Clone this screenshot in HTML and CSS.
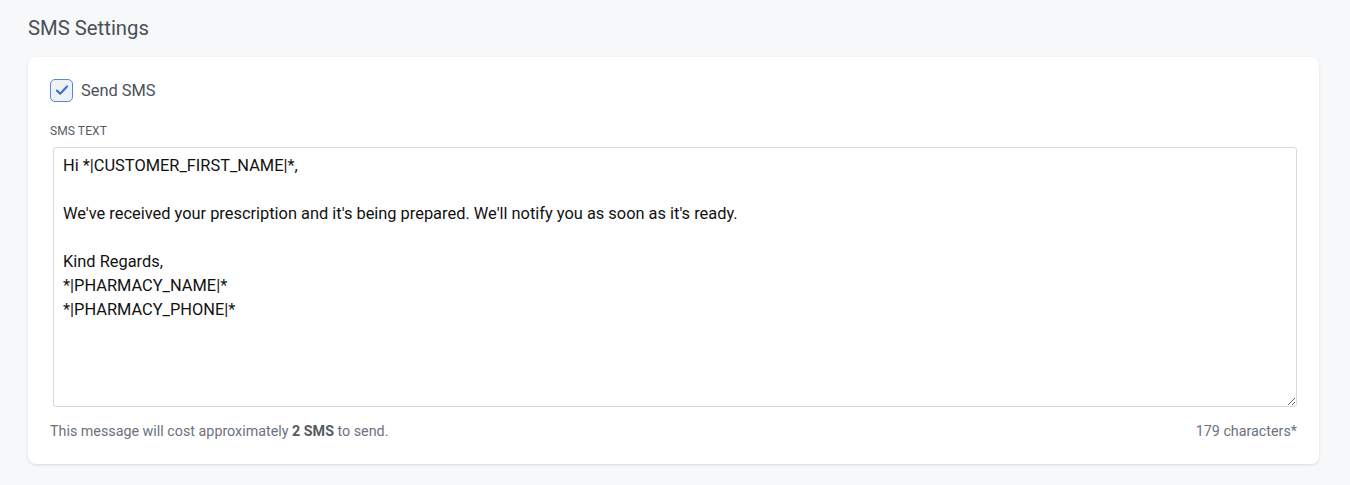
FILE: index.html
```html
<!DOCTYPE html>
<html lang="en">
<head>
  <meta charset="UTF-8" />
  <meta name="viewport" content="width=device-width, initial-scale=1" />
  <title>SMS Settings</title>
  <link rel="stylesheet" href="styles.css">
</head>
<body>

  <h2 class="page-title">SMS Settings</h2>

  <div class="card">
    <label class="check-row">
      <span class="check-box">
        <svg width="16" height="16" viewBox="0 0 16 16"><path d="M3 8.6l3.2 3.1L13 4.4" fill="none" stroke="#3f72d2" stroke-width="2.2" stroke-linecap="round" stroke-linejoin="round"/></svg>
      </span>
      <span>Send SMS</span>
    </label>

    <div class="field-label">SMS Text</div>
    <textarea class="sms-text">Hi *|CUSTOMER_FIRST_NAME|*,

We've received your prescription and it's being prepared. We'll notify you as soon as it's ready.

Kind Regards,
*|PHARMACY_NAME|*
*|PHARMACY_PHONE|*</textarea>

    <div class="field-foot">
      <span>This message will cost approximately <strong>2 SMS</strong> to send.</span>
      <span>179 characters*</span>
    </div>
  </div>

</body>
</html>
```

FILE: styles.css
```css
body {
  margin: 0;
  padding: 15px 31px 22px 28px;
  background: #f7f8fa;
  font-family: Roboto, "Liberation Sans", sans-serif;
  color: #4b5058;
}
.page-title {
  margin: 0 0 15px;
  font-size: 20.3px;
  font-weight: 400;
  line-height: 27px;
  color: #4a4f56;
}
.card {
  background: white;
  border-radius: 8px;
  box-shadow: 0 1px 3px rgba(0, 0, 0, 0.12);
  padding: 21px 22px 23px 22px;
}
.check-row {
  display: flex;
  align-items: center;
  gap: 8px;
  height: 24px;
  font-size: 16.4px;
  color: #4b5058;
}
.check-box {
  box-sizing: border-box;
  width: 23px;
  height: 23px;
  border: 1.5px solid #5a86d6;
  border-radius: 5px;
  background: #eef1f6;
  display: flex;
  align-items: center;
  justify-content: center;
}
.field-label {
  margin-top: 21px;
  font-size: 12px;
  line-height: 16px;
  letter-spacing: 0.1px;
  text-transform: uppercase;
  color: #555b63;
}
.sms-text {
  display: block;
  box-sizing: border-box;
  width: calc(100% - 3px);
  margin: 8px 0 0 3px;
  height: 260px;
  padding: 6px 9px;
  border: 1px solid #d6d9de;
  border-radius: 3px;
  font-family: Roboto, "Liberation Sans", sans-serif;
  font-size: 16.4px;
  line-height: 24px;
  color: #111;
  resize: vertical;
}
.field-foot {
  display: flex;
  justify-content: space-between;
  margin-top: 14px;
  font-size: 14.3px;
  line-height: 20px;
  color: #6b7280;
}
.field-foot strong {
  color: #555b63;
}
```
